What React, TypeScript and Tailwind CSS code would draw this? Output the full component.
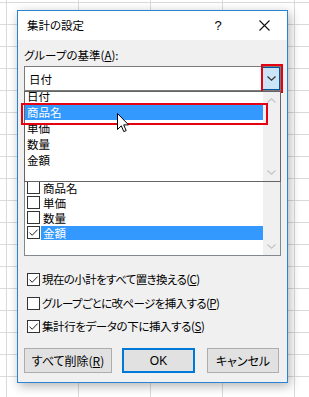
import React from 'react'

const jp = "font-['Noto_Sans_CJK_JP','Noto_Sans_CJK_SC',sans-serif] [font-feature-settings:'palt']"

function CheckBox({ checked }: { checked?: boolean }) {
  return (
    <span className="w-[13px] h-[13px] border border-[#333333] bg-white flex items-center justify-center shrink-0">
      {checked && (
        <svg width="11" height="11" viewBox="0 0 11 11">
          <path d="M1.5 5.6 L4.2 8.3 L9.6 2.6" fill="none" stroke="#222" strokeWidth="1" />
        </svg>
      )}
    </span>
  )
}

function Chevron({ up, color = '#c4c4c4' }: { up?: boolean; color?: string }) {
  return (
    <svg width="9" height="5" viewBox="0 0 9 5">
      <path d={up ? 'M0.5 4.5 L4.5 0.8 L8.5 4.5' : 'M0.5 0.5 L4.5 4.2 L8.5 0.5'} fill="none" stroke={color} strokeWidth="1.2" />
    </svg>
  )
}

const dropItems = ['日付', '商品名', '単価', '数量', '金額']

// first row (日付) sits under the open drop-down, so the list starts at 商品名
const fieldItems = [
  { label: '商品名', checked: false },
  { label: '単価', checked: false },
  { label: '数量', checked: false },
  { label: '金額', checked: true },
]

function Mnemonic({ text, letter, tail = '' }: { text: string; letter: string; tail?: string }) {
  return (
    <span>
      {text}(<span className="underline">{letter}</span>){tail}
    </span>
  )
}

export default function App() {
  return (
    <div
      className={`relative w-[309px] h-[397px] overflow-hidden bg-white bg-[linear-gradient(to_right,#dadada_1px,transparent_1px),linear-gradient(to_bottom,#dadada_1px,transparent_1px)] bg-[size:72px_22px] bg-[position:6px_2px] pl-[17px] pt-[10px] text-black ${jp}`}
    >
      <div className="w-[271px] h-[373px] border border-[#2b83d3] bg-[#f0f0f0] shadow-[2px_3px_10px_rgba(0,0,0,0.3)] flex flex-col">
        {/* title bar */}
        <div className="h-[29px] bg-white flex items-center shrink-0">
          <span className="pl-[9px] text-[11.5px]">集計の設定</span>
          <span className="ml-auto w-[30px] text-center text-[13px] font-['Liberation_Sans',sans-serif]">?</span>
          <span className="ml-[8px] w-[46px] flex justify-center">
            <svg width="11" height="11" viewBox="0 0 11 11">
              <path d="M0.5 0.5 L10.5 10.5 M10.5 0.5 L0.5 10.5" stroke="#111" strokeWidth="1.1" />
            </svg>
          </span>
        </div>

        {/* body */}
        <div className="flex-1 px-[6px] flex flex-col text-[11.5px]">
          <div className="mt-[7px] h-[16px] leading-[16px]">
            <Mnemonic text="グループの基準" letter="A" tail=":" />
          </div>

          <div className="relative mt-[3px]">
            <div className="h-[25px] border border-[#7a7a7a] bg-white flex items-center">
              <span className="pl-[4px] leading-[16px]">日付</span>
              <span className="ml-auto h-full w-[18px] border border-[#005499] bg-[#cce4f7] flex items-center justify-center">
                <Chevron color="#333" />
              </span>
            </div>

            {/* opened drop-down list */}
            <div className="absolute left-0 top-full z-10 w-full h-[91px] border border-[#646464] bg-white flex overflow-hidden">
              <div className="flex-1 flex flex-col -mt-[4px]">
                {dropItems.map((it, i) => (
                  <div
                    key={it}
                    className={`h-[16px] leading-[16px] shrink-0 pl-[2px] ${i === 1 ? 'bg-[#3399ff] text-white' : ''}`}
                  >
                    {it}
                  </div>
                ))}
              </div>
              <div className="w-[17px] bg-[#f0f0f0] flex flex-col items-center justify-between py-[6px]">
                <Chevron up />
                <Chevron />
              </div>
            </div>
          </div>

          {/* field list (upper part hidden under the drop-down) */}
          <div className="mt-[66px] h-[99px] border border-[#828790] bg-white flex">
            <div className="flex-1 flex flex-col pt-[22px] pl-[2px]">
              {fieldItems.map((it) => (
                <div key={it.label} className="h-[15px] flex items-center">
                  <CheckBox checked={it.checked} />
                  <span
                    className={`h-[14px] leading-[14px] flex-1 ml-[1px] pl-[2px] ${it.checked ? 'bg-[#3399ff] text-white' : ''}`}
                  >
                    {it.label}
                  </span>
                </div>
              ))}
            </div>
            <div className="w-[17px] bg-[#f0f0f0] flex flex-col items-center justify-end pb-[6px]">
              <Chevron />
            </div>
          </div>

          <div className="mt-[15px] h-[16px] leading-[16px] flex items-center gap-[2px] pl-[3px] tracking-[-0.6px]">
            <CheckBox checked />
            <Mnemonic text="現在の小計をすべて置き換える" letter="C" />
          </div>
          <div className="mt-[8px] h-[16px] leading-[16px] flex items-center gap-[2px] pl-[3px] tracking-[-0.6px]">
            <CheckBox />
            <Mnemonic text="グループごとに改ページを挿入する" letter="P" />
          </div>
          <div className="mt-[7px] h-[16px] leading-[16px] flex items-center gap-[2px] pl-[3px] tracking-[-0.4px]">
            <CheckBox checked />
            <Mnemonic text="集計行をデータの下に挿入する" letter="S" />
          </div>

          <div className="mt-[14px] h-[25px] flex text-[12px]">
            <button className="w-[88px] h-full border border-[#adadad] bg-[#e1e1e1]">
              <Mnemonic text="すべて削除" letter="R" />
            </button>
            <button className="ml-[10px] w-[73px] h-full border-2 border-[#0078d7] bg-[#e1e1e1] font-['Liberation_Sans',sans-serif]">
              OK
            </button>
            <button className="ml-[12px] w-[72px] h-full border border-[#adadad] bg-[#e1e1e1]">キャンセル</button>
          </div>
        </div>
      </div>

      {/* red annotations */}
      <div className="absolute left-[261px] top-[64px] w-[22px] h-[29px] border-2 border-[#e60012]" />
      <div className="absolute left-[21px] top-[103px] w-[247px] h-[22px] border-2 border-[#e60012] z-20" />

      {/* mouse cursor */}
      <svg className="absolute left-[117px] top-[113px] z-30" width="13" height="20" viewBox="0 0 13 20">
        <path d="M0.5 0.5 L0.5 16.5 L4.3 12.8 L6.8 18.6 L9.2 17.6 L6.7 11.9 L11.6 11.9 Z" fill="#fff" stroke="#000" strokeWidth="1" />
      </svg>
    </div>
  )
}
